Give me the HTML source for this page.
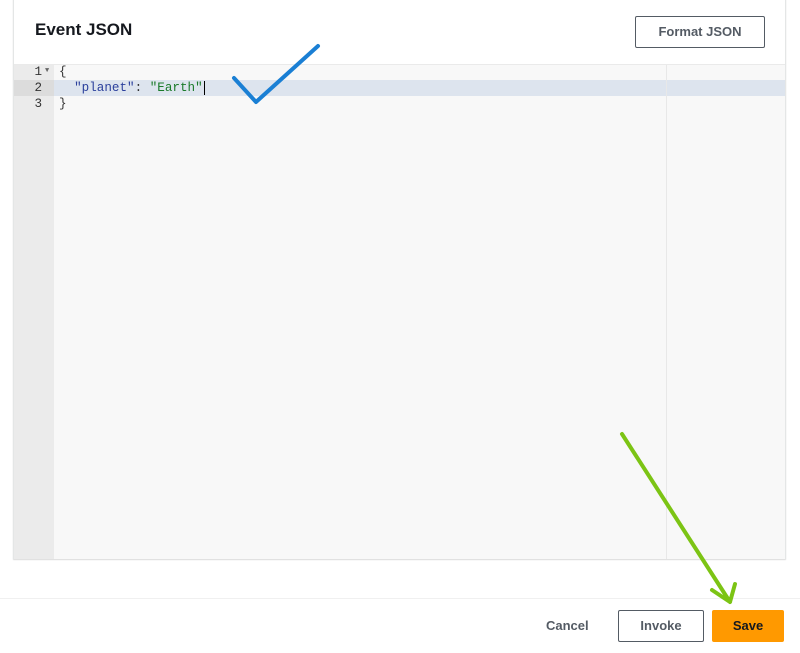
<!DOCTYPE html>
<html><head><style>
body{margin:0;width:800px;height:653px;background:#fff;font-family:"Liberation Sans",sans-serif;position:relative;overflow:hidden}
.card{position:absolute;left:13px;top:-2px;width:771px;height:560px;border:1px solid #e4e6e6;border-top:none;box-shadow:0 1px 1px rgba(0,0,0,.15);background:#fff}
h2{position:absolute;left:21px;top:22px;margin:0;font-size:17px;font-weight:bold;color:#16191f}
.btn{position:absolute;box-sizing:border-box;border:1px solid #545b64;border-radius:2px;background:#fff;font-weight:bold;font-size:13px;color:#545b64;text-align:center}
.ed{position:absolute;left:0;top:66px;width:771px;height:494px;background:#f8f8f8;border-top:1px solid #eaeaea}
.gut{position:absolute;left:0;top:0;width:40px;height:100%;background:#ebebeb}
.pm{position:absolute;left:652px;top:0;width:1px;height:100%;background:#e8e8e8}
.act{position:absolute;left:40px;top:15px;right:0;height:16px;background:#dde4ee}
.actg{position:absolute;left:0;top:15px;width:40px;height:16px;background:#dcdcdc}
.ln{position:absolute;font-family:"Liberation Mono",monospace;font-size:12.6px;line-height:16px;color:#333}
.num{left:0;width:28px;text-align:right;color:#333}
</style></head><body>
<div class="card">
<h2>Event JSON</h2>
<div class="btn" style="left:621px;top:18px;width:130px;height:32px;line-height:30px">Format JSON</div>
<div class="ed">
<div class="gut"></div><div class="actg"></div><div class="act"></div><div class="pm"></div>
<div class="ln num" style="top:-1px">1</div><div class="ln" style="left:31px;top:-2px;font-size:7px;color:#666">▼</div>
<div class="ln num" style="top:15px">2</div>
<div class="ln num" style="top:31px">3</div>
<div class="ln" style="left:45px;top:-1px">{</div>
<div class="ln" style="left:45px;top:15px">&nbsp;&nbsp;<span style="color:#2a3f9c">"planet"</span>: <span style="color:#1a7a2a">"Earth"</span><span style="border-left:1px solid #000;margin-left:1px"></span></div>
<div class="ln" style="left:45px;top:31px">}</div>
</div>
</div>
<div style="position:absolute;left:0;top:598px;width:800px;height:1px;background:#f0f0f0"></div>
<div style="position:absolute;left:546px;top:618px;font-size:13px;font-weight:bold;color:#545b64">Cancel</div>
<div class="btn" style="left:618px;top:610px;width:86px;height:32px;line-height:30px">Invoke</div>
<div class="btn" style="left:712px;top:610px;width:72px;height:32px;line-height:32px;background:#ff9900;border:none;color:#16191f">Save</div>
<svg style="position:absolute;left:0;top:0" width="800" height="653">
<path d="M234 78 L256 102 L318 46" stroke="#1a7fd4" stroke-width="4" fill="none" stroke-linecap="round" stroke-linejoin="round"/>
<path d="M622 434 L730 602 M712 590 L730 602 L735 584" stroke="#7cc414" stroke-width="4" fill="none" stroke-linecap="round" stroke-linejoin="round"/>
</svg>
</body></html>
